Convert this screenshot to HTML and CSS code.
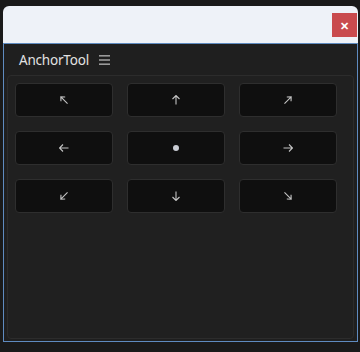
FILE: index.html
```html
<!DOCTYPE html>
<html lang="en">

<head>
    <meta charset="UTF-8">
    <meta name="viewport" content="width=device-width, initial-scale=1.0">
    <link rel="stylesheet" href="styles.css">
    <title>AnchorTool</title>
</head>

<body>
    <!-- Ventana flotante -->
    <div class="ventana">
        <div class="barraTitulo">
            <div class="cerrar">&#x2715;</div>
        </div>
        <div class="marco">
            <div class="cabecera">
                <span class="titulo">AnchorTool</span>
                <span class="menu">
                    <svg width="11" height="10" viewBox="0 0 11 10">
                        <rect x="0" y="0" width="11" height="1.6" fill="#9a9a9a"/>
                        <rect x="0" y="4.2" width="11" height="1.6" fill="#9a9a9a"/>
                        <rect x="0" y="8.4" width="11" height="1.6" fill="#9a9a9a"/>
                    </svg>
                </span>
            </div>
            <div class="panel">
                <div class="rejilla">
                    <!-- Fila superior -->
                    <div class="boton"><svg class="flecha" viewBox="0 0 10 10"><path transform="rotate(-135 5 5)" d="M0 5H9.5M6.3 2L9.5 5L6.3 8"/></svg></div>
                    <div class="boton"><svg class="flecha" viewBox="0 0 10 10"><path transform="rotate(-90 5 5)" d="M0.5 5H9.5M6 1.5L9.5 5L6 8.5"/></svg></div>
                    <div class="boton"><svg class="flecha" viewBox="0 0 10 10"><path transform="rotate(-45 5 5)" d="M0 5H9.5M6.3 2L9.5 5L6.3 8"/></svg></div>
                    <!-- Fila central -->
                    <div class="boton"><svg class="flecha" viewBox="0 0 10 10"><path transform="rotate(180 5 5)" d="M0.5 5H9.5M6 1.5L9.5 5L6 8.5"/></svg></div>
                    <div class="boton"><span class="punto"></span></div>
                    <div class="boton"><svg class="flecha" viewBox="0 0 10 10"><path d="M0.5 5H9.5M6 1.5L9.5 5L6 8.5"/></svg></div>
                    <!-- Fila inferior -->
                    <div class="boton"><svg class="flecha" viewBox="0 0 10 10"><path transform="rotate(135 5 5)" d="M0 5H9.5M6.3 2L9.5 5L6.3 8"/></svg></div>
                    <div class="boton"><svg class="flecha" viewBox="0 0 10 10"><path transform="rotate(90 5 5)" d="M0.5 5H9.5M6 1.5L9.5 5L6 8.5"/></svg></div>
                    <div class="boton"><svg class="flecha" viewBox="0 0 10 10"><path transform="rotate(45 5 5)" d="M0 5H9.5M6.3 2L9.5 5L6.3 8"/></svg></div>
                </div>
            </div>
        </div>
    </div>
</body>

</html>
```

FILE: styles.css
```css
body {
    margin: 0px;
    padding: 6px 0px 0px 3px;
    background-color: #1a1a1a;
    font-family: "Noto Sans", "Open Sans", sans-serif;
}

.ventana {
    width: 355px;
}

.barraTitulo {
    height: 37px;
    background-color: #eef2f8;
    border-radius: 6px 6px 0px 0px;
    display: flex;
    justify-content: flex-end;
    align-items: center;
    padding-right: 1px;
}

.cerrar {
    width: 25px;
    height: 24px;
    background-color: #c94b4e;
    color: #fff;
    font-size: 11px;
    font-weight: bold;
    display: flex;
    align-items: center;
    justify-content: center;
    margin-top: 1px;
}

.marco {
    height: 297px;
    background-color: #1f1f1f;
    border: 1px solid #5f8bc0;
    display: flex;
    flex-direction: column;
}

.cabecera {
    height: 31px;
    display: flex;
    align-items: center;
    padding-left: 15px;
    gap: 10px;
}

.titulo {
    color: #e2e2e2;
    font-size: 13.5px;
    letter-spacing: -0.2px;
}

.menu {
    display: flex;
    margin-top: 1px;
}

.panel {
    flex: 1;
    margin: 0px 3px 2px 3px;
    background-color: #202020;
    border: 1px solid #2c2c2c;
    border-radius: 4px;
    padding: 7px 0px 0px 7px;
}

.rejilla {
    display: grid;
    grid-template-columns: 98px 98px 98px;
    grid-auto-rows: 34px;
    column-gap: 14px;
    row-gap: 14px;
}

.boton {
    background-color: #0f0f0f;
    border: 1px solid #2e2e2e;
    border-radius: 4px;
    display: flex;
    align-items: center;
    justify-content: center;
}

.flecha {
    width: 10px;
    height: 10px;
    fill: none;
    stroke: #c4c4c4;
    stroke-width: 1.1;
}

.punto {
    width: 6px;
    height: 6px;
    border-radius: 50%;
    background-color: #c9ccd4;
}
```
